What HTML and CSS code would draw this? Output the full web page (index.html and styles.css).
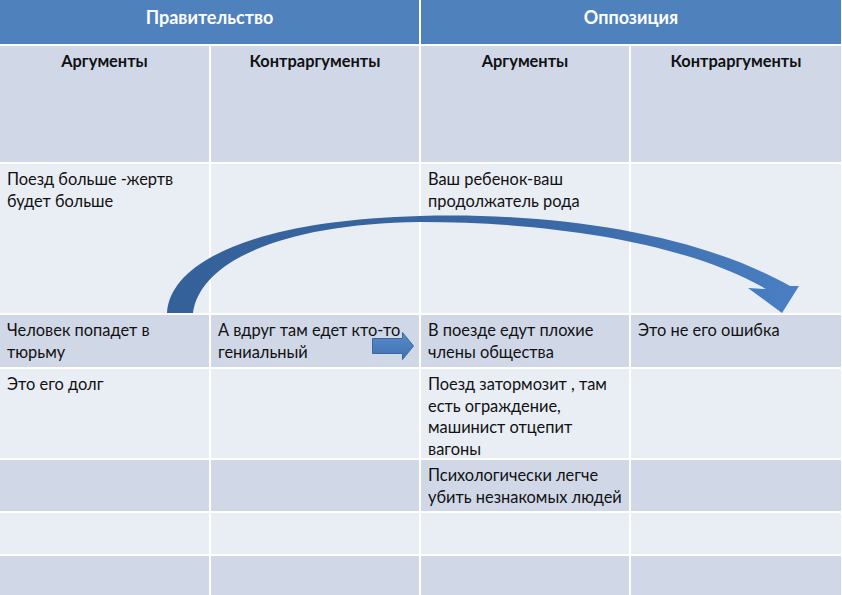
FILE: index.html
```html
<!DOCTYPE html>
<html lang="ru">
<head>
<meta charset="utf-8">
<title>Правительство и оппозиция</title>
<link rel="stylesheet" href="styles.css">
</head>
<body>
<div class="page">
  <div class="table">
    <div class="cell head span2">Правительство</div>
    <div class="cell head span2">Оппозиция</div>

    <div class="cell dark sub">Аргументы</div>
    <div class="cell dark sub">Контраргументы</div>
    <div class="cell dark sub">Аргументы</div>
    <div class="cell dark sub">Контраргументы</div>

    <div class="cell light">Поезд больше -жертв будет больше</div>
    <div class="cell light"></div>
    <div class="cell light">Ваш ребенок-ваш продолжатель рода</div>
    <div class="cell light"></div>

    <div class="cell dark">Человек попадет в тюрьму</div>
    <div class="cell dark">А вдруг там едет кто-то гениальный</div>
    <div class="cell dark">В поезде едут плохие члены общества</div>
    <div class="cell dark">Это не его ошибка</div>

    <div class="cell light">Это его долг</div>
    <div class="cell light"></div>
    <div class="cell light">Поезд затормозит , там есть ограждение, машинист отцепит вагоны</div>
    <div class="cell light"></div>

    <div class="cell dark"></div>
    <div class="cell dark"></div>
    <div class="cell dark">Психологически легче убить незнакомых людей</div>
    <div class="cell dark"></div>

    <div class="cell light"></div>
    <div class="cell light"></div>
    <div class="cell light"></div>
    <div class="cell light"></div>

    <div class="cell dark"></div>
    <div class="cell dark"></div>
    <div class="cell dark"></div>
    <div class="cell dark"></div>
  </div>

  <svg class="arrows" width="842" height="595" viewBox="0 0 842 595" aria-hidden="true">
    <defs>
      <linearGradient id="curveGrad" x1="160" y1="0" x2="800" y2="0" gradientUnits="userSpaceOnUse">
        <stop offset="0" stop-color="#35619a"/>
        <stop offset="0.6" stop-color="#3a68a4"/>
        <stop offset="1" stop-color="#4a7fc4"/>
      </linearGradient>
      <linearGradient id="smallGrad" x1="0" y1="332" x2="0" y2="360" gradientUnits="userSpaceOnUse">
        <stop offset="0" stop-color="#5a8ccb"/>
        <stop offset="1" stop-color="#3f70b0"/>
      </linearGradient>
    </defs>
    <path fill="url(#curveGrad)" d="M167,313 C170,260 260,220 420,216 C560,212 700,235 790,286 L799,286 L782,313 L748,288 L766,289 C690,245 560,222 420,222 C280,224 200,262 193,313 Z"/>
    <path fill="url(#smallGrad)" stroke="#3d669c" stroke-width="1" d="M372.5,338.5 L402.5,338.5 L402.5,332.5 L413.5,346 L402.5,359.5 L402.5,353.5 L372.5,353.5 Z"/>
  </svg>
</div>
</body>
</html>
```

FILE: styles.css
```css
html, body {
  margin: 0;
  padding: 0;
  background: #ffffff;
}

.page {
  position: relative;
  width: 842px;
  height: 595px;
  overflow: hidden;
  font-family: "Lato", "Liberation Sans", sans-serif;
}

.table {
  display: grid;
  width: 841px;
  grid-template-columns: 209px 208px 208px 210px;
  grid-template-rows: 44px 116px 149px 52px 89px 51px 41px 40px;
  column-gap: 2px;
  row-gap: 2px;
  background: #ffffff;
}

.cell {
  padding: 4px 2px 0 7px;
  font-size: 16.4px;
  line-height: 21.6px;
  color: #111111;
  box-sizing: border-box;
}

.span2 {
  grid-column: span 2;
}

.head {
  background: #4f81bd;
  color: #ffffff;
  font-weight: 700;
  font-size: 18px;
  text-align: center;
  padding: 6px 0 0 0;
  line-height: 22px;
}

.sub {
  font-weight: 700;
  font-size: 16.4px;
  text-align: center;
  padding: 4px 0 0 0;
}

.dark {
  background: #d0d8e8;
}

.light {
  background: #e9edf4;
}

.arrows {
  position: absolute;
  left: 0;
  top: 0;
  pointer-events: none;
}
```
